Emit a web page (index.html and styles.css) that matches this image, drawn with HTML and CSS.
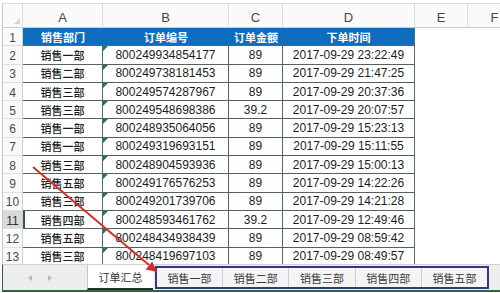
FILE: index.html
```html
<!DOCTYPE html>
<html lang="zh">
<head>
<meta charset="utf-8">
<link rel="stylesheet" href="styles.css">
</head>
<body>
<div class="app">
  <div class="top"></div>
  <div class="sheet">
    <div class="c ch corner"></div><div class="c ch">A</div><div class="c ch">B</div><div class="c ch">C</div><div class="c ch">D</div><div class="c ch">E</div><div class="c ch">F</div>

    <div class="c rh">1</div><div class="c hd">销售部门</div><div class="c hd">订单编号</div><div class="c hd">订单金额</div><div class="c hd last">下单时间</div><div class="c"></div><div class="c"></div>

    <div class="c rh">2</div><div class="c d zh">销售一部</div><div class="c d num">800249934854177</div><div class="c d">89</div><div class="c d">2017-09-29 23:22:49</div><div class="c"></div><div class="c"></div>
    <div class="c rh">3</div><div class="c d zh">销售二部</div><div class="c d num">800249738181453</div><div class="c d">89</div><div class="c d">2017-09-29 21:47:25</div><div class="c"></div><div class="c"></div>
    <div class="c rh">4</div><div class="c d zh">销售三部</div><div class="c d num">800249574287967</div><div class="c d">89</div><div class="c d">2017-09-29 20:37:36</div><div class="c"></div><div class="c"></div>
    <div class="c rh">5</div><div class="c d zh">销售三部</div><div class="c d num">800249548698386</div><div class="c d">39.2</div><div class="c d">2017-09-29 20:07:57</div><div class="c"></div><div class="c"></div>
    <div class="c rh">6</div><div class="c d zh">销售一部</div><div class="c d num">800248935064056</div><div class="c d">89</div><div class="c d">2017-09-29 15:23:13</div><div class="c"></div><div class="c"></div>
    <div class="c rh">7</div><div class="c d zh">销售一部</div><div class="c d num">800249319693151</div><div class="c d">89</div><div class="c d">2017-09-29 15:11:55</div><div class="c"></div><div class="c"></div>
    <div class="c rh">8</div><div class="c d zh">销售三部</div><div class="c d num">800248904593936</div><div class="c d">89</div><div class="c d">2017-09-29 15:00:13</div><div class="c"></div><div class="c"></div>
    <div class="c rh">9</div><div class="c d zh">销售五部</div><div class="c d num">800249176576253</div><div class="c d">89</div><div class="c d">2017-09-29 14:22:26</div><div class="c"></div><div class="c"></div>
    <div class="c rh">10</div><div class="c d zh">销售三部</div><div class="c d num">800249201739706</div><div class="c d">89</div><div class="c d">2017-09-29 14:21:28</div><div class="c"></div><div class="c"></div>
    <div class="c rh sel">11</div><div class="c d zh active">销售四部</div><div class="c d num">800248593461762</div><div class="c d">39.2</div><div class="c d">2017-09-29 12:49:46</div><div class="c"></div><div class="c"></div>
    <div class="c rh">12</div><div class="c d zh">销售五部</div><div class="c d num">800248434938439</div><div class="c d">89</div><div class="c d">2017-09-29 08:59:42</div><div class="c"></div><div class="c"></div>
    <div class="c rh">13</div><div class="c d zh">销售三部</div><div class="c d num">800248419697103</div><div class="c d">89</div><div class="c d">2017-09-29 08:49:57</div><div class="c"></div><div class="c"></div>
  </div>
  <div class="tabbar">
    <div class="nav">
      <svg width="4" height="6" viewBox="0 0 4 6"><polygon points="4,0 0,3 4,6" fill="#b8b8b8"/></svg>
      <svg width="4" height="6" viewBox="0 0 4 6"><polygon points="0,0 4,3 0,6" fill="#b8b8b8"/></svg>
    </div>
    <div class="tab-active">订单汇总</div>
    <div class="group">
      <div class="tab">销售一部</div>
      <div class="tab">销售二部</div>
      <div class="tab">销售三部</div>
      <div class="tab">销售四部</div>
      <div class="tab">销售五部</div>
    </div>
  </div>
  <div class="status"></div>
  <svg class="arrow" width="500" height="293" viewBox="0 0 500 293">
    <line x1="33" y1="167" x2="149" y2="265" stroke="#d2302c" stroke-width="2"/>
    <polygon points="157,272 145.6,269.4 152.2,261.6" fill="#d2302c"/>
  </svg>
</div>
</body>
</html>
```
FILE: styles.css
```css
body {
  margin: 0;
  background: #fff;
}

.app {
  width: 500px;
  height: 293px;
  position: relative;
  overflow: hidden;
  background: #fff;
  font-family: "Liberation Sans", "Noto Sans CJK SC", sans-serif;
}

.top {
  height: 4px;
  margin-left: 2px;
  border-bottom: 1px solid #dcdcdc;
  box-sizing: border-box;
}

.sheet {
  height: 260px;
  overflow: hidden;
  margin-left: 2px;
  border-left: 1px solid #c8c8c8;
  display: grid;
  grid-template-columns: 20px 80px 126px 54px 132px 53px 54px;
  grid-template-rows: 24px repeat(13, 18.3px);
}

.c {
  display: flex;
  align-items: center;
  justify-content: center;
  box-sizing: border-box;
  white-space: nowrap;
  font-size: 12px;
  color: #1c1c1c;
  position: relative;
}

.ch {
  background: #fafafa;
  border-right: 1px solid #dadada;
  border-bottom: 1px solid #cbcbcb;
  color: #464646;
  font-size: 13px;
  padding-top: 3px;
}

.corner::after {
  content: "";
  position: absolute;
  right: 2px;
  bottom: 3px;
  border-bottom: 6px solid #d4d4d4;
  border-left: 6px solid transparent;
}

.rh {
  background: #fafafa;
  border-right: 1px solid #cfcfcf;
  border-bottom: 1px solid #e0e0e0;
  color: #4a4a4a;
  font-size: 12px;
  padding-top: 2px;
}

.rh.sel {
  background: #d9d9d9;
  color: #2f2f2f;
}

.hd {
  background: #0e6ebd;
  color: #fff;
  font-weight: 700;
  font-size: 11px;
  border-bottom: 1px solid #4e6a6a;
}

.hd.last {
  border-right: 1px solid #4e6a6a;
}

.d {
  border-right: 1px solid #4e6a6a;
  border-bottom: 1px solid #56625f;
}

.zh {
  font-size: 11px;
  font-weight: 500;
}

.d.active {
  box-shadow: inset 2px 0 0 #2c5a3c;
}

.num::before {
  content: "";
  position: absolute;
  left: 0;
  top: 0;
  border-top: 5px solid #1f7a47;
  border-right: 5px solid transparent;
}

.tabbar {
  height: 26px;
  margin-left: 2px;
  border-left: 1px solid #2d5f3c;
  border-top: 1px solid #d2d2d2;
  box-sizing: border-box;
  background: #ededed;
  display: flex;
}

.nav {
  width: 84px;
  display: flex;
  align-items: center;
  gap: 16px;
  padding-left: 25px;
  box-sizing: border-box;
}

.tab-active {
  width: 66px;
  background: #fff;
  border-left: 1px solid #c4c4c4;
  border-bottom: 2px solid #2a2a2a;
  box-sizing: border-box;
  display: flex;
  align-items: center;
  justify-content: center;
  font-size: 11px;
  color: #333;
}

.group {
  width: 334px;
  margin: 1px 0 1px 2px;
  border: 2px solid #3e3183;
  box-sizing: border-box;
  display: flex;
  background: #f4f4f4;
}

.tab {
  flex: 1;
  border-left: 1px solid #cdcdcd;
  display: flex;
  align-items: center;
  justify-content: center;
  font-size: 11px;
  color: #3a3a3a;
}

.tab:first-child {
  border-left: 0;
}

.status {
  height: 2px;
  margin-left: 2px;
  background: #2b6a3f;
}

.arrow {
  position: absolute;
  left: 0;
  top: 0;
  pointer-events: none;
}
```
